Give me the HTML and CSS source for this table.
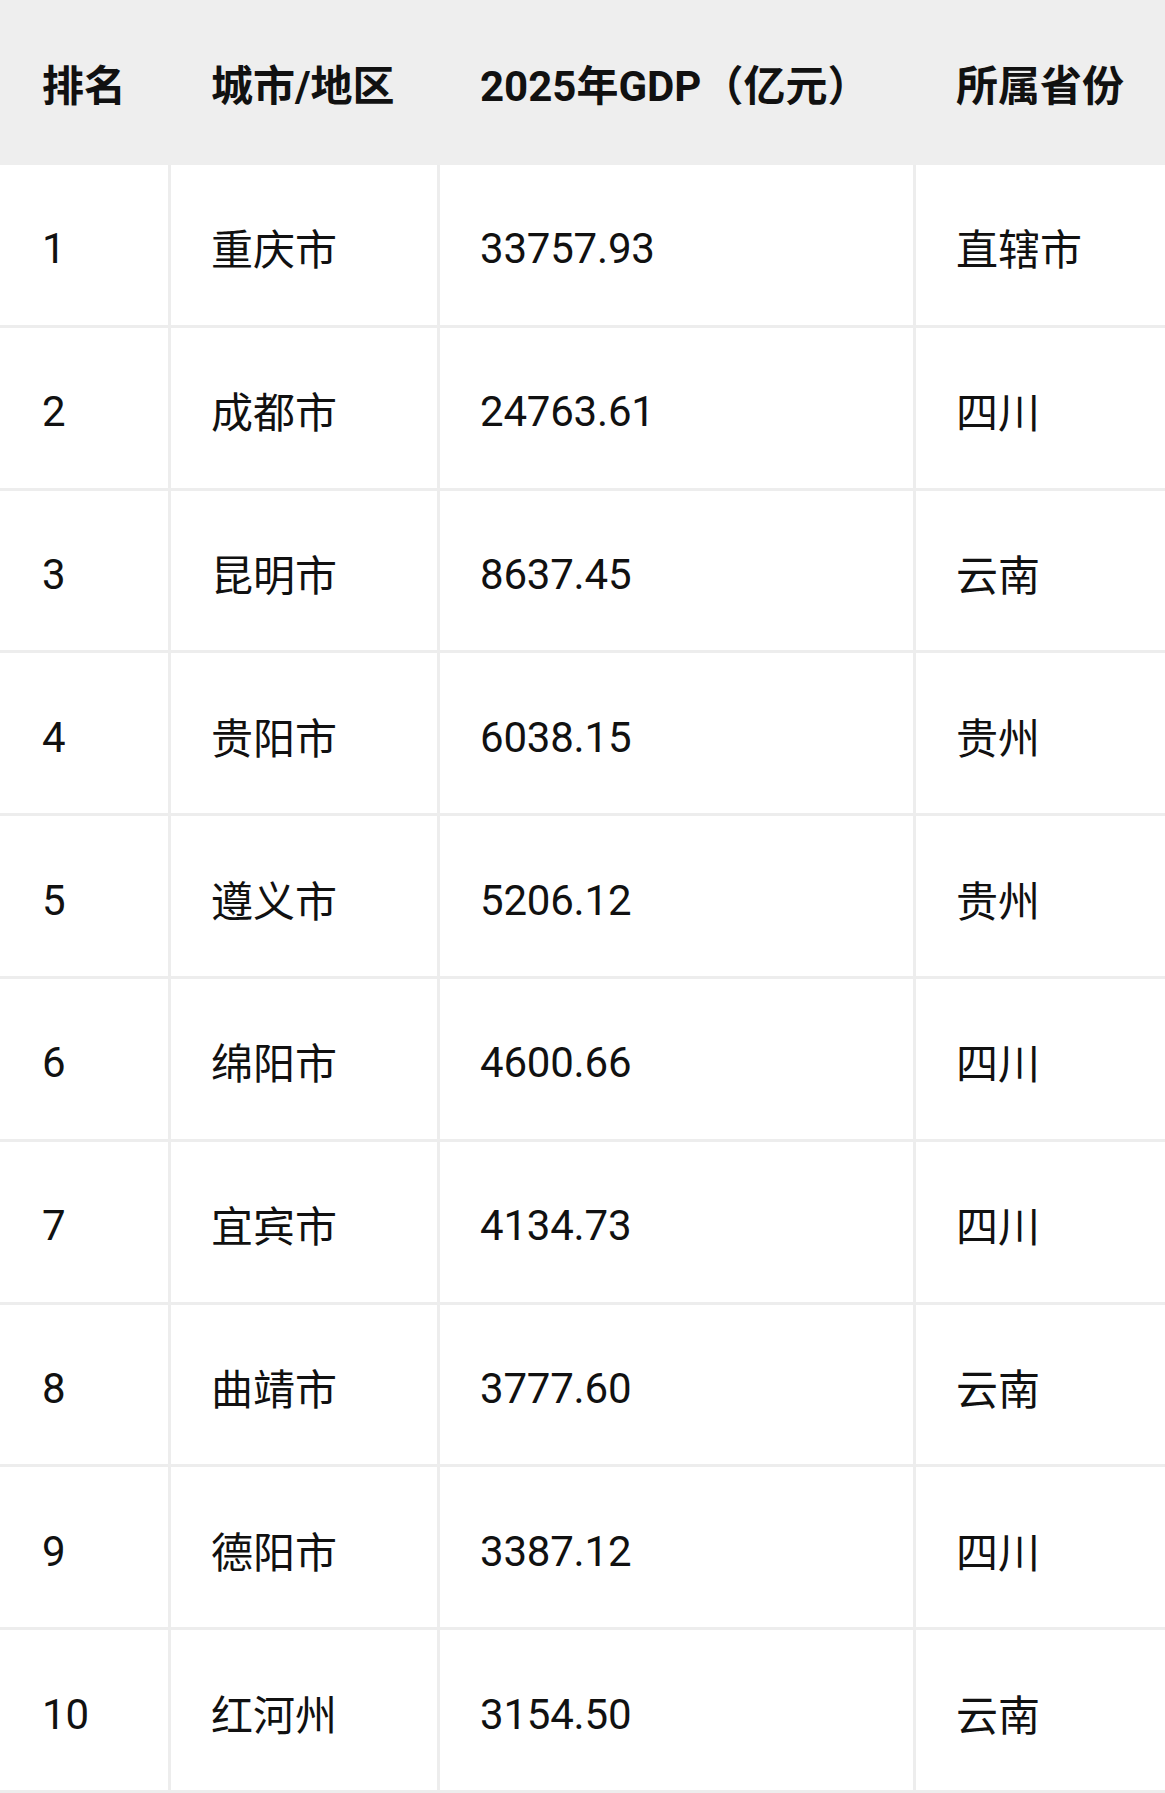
FILE: index.html
```html
<!DOCTYPE html>
<html lang="zh-CN">
<head>
<meta charset="utf-8">
<title>2025年GDP排名</title>
<link rel="stylesheet" href="styles.css">
</head>
<body>
<div class="table">
  <div class="row head">
    <div class="cell">排名</div>
    <div class="cell">城市/地区</div>
    <div class="cell">2025年GDP（亿元）</div>
    <div class="cell">所属省份</div>
  </div>
  <div class="row"><div class="cell"><span class="num">1</span></div><div class="cell">重庆市</div><div class="cell"><span class="num">33757.93</span></div><div class="cell">直辖市</div></div>
  <div class="row"><div class="cell"><span class="num">2</span></div><div class="cell">成都市</div><div class="cell"><span class="num">24763.61</span></div><div class="cell">四川</div></div>
  <div class="row"><div class="cell"><span class="num">3</span></div><div class="cell">昆明市</div><div class="cell"><span class="num">8637.45</span></div><div class="cell">云南</div></div>
  <div class="row"><div class="cell"><span class="num">4</span></div><div class="cell">贵阳市</div><div class="cell"><span class="num">6038.15</span></div><div class="cell">贵州</div></div>
  <div class="row"><div class="cell"><span class="num">5</span></div><div class="cell">遵义市</div><div class="cell"><span class="num">5206.12</span></div><div class="cell">贵州</div></div>
  <div class="row"><div class="cell"><span class="num">6</span></div><div class="cell">绵阳市</div><div class="cell"><span class="num">4600.66</span></div><div class="cell">四川</div></div>
  <div class="row"><div class="cell"><span class="num">7</span></div><div class="cell">宜宾市</div><div class="cell"><span class="num">4134.73</span></div><div class="cell">四川</div></div>
  <div class="row"><div class="cell"><span class="num">8</span></div><div class="cell">曲靖市</div><div class="cell"><span class="num">3777.60</span></div><div class="cell">云南</div></div>
  <div class="row"><div class="cell"><span class="num">9</span></div><div class="cell">德阳市</div><div class="cell"><span class="num">3387.12</span></div><div class="cell">四川</div></div>
  <div class="row"><div class="cell"><span class="num">10</span></div><div class="cell">红河州</div><div class="cell"><span class="num">3154.50</span></div><div class="cell">云南</div></div>
</div>
</body>
</html>
```

FILE: styles.css
```css
html, body {
  margin: 0;
  padding: 0;
  background: #ffffff;
}
body {
  font-family: Roboto, "Noto Sans CJK SC", sans-serif;
  font-size: 42px;
  color: #111111;
  overflow: hidden;
}
.table {
  width: 1165px;
}
.row {
  display: grid;
  grid-template-columns: 168px 269px 476px 1fr;
  height: 162.8px;
  box-sizing: border-box;
  border-bottom: 3px solid #ededed;
}
.cell {
  display: flex;
  align-items: center;
  box-sizing: border-box;
  padding-left: 40px;
  padding-top: 4px;
  border-left: 3px solid #ededed;
  white-space: nowrap;
}
.cell:first-child {
  border-left: none;
  padding-left: 42px;
}
.num {
  font-size: 42px;
  font-weight: 400;
  letter-spacing: -0.2px;
  padding-top: 4px;
}
.head {
  height: 165px;
  background: #eeeeee;
  border-bottom: none;
  font-weight: 700;
}
.head .cell {
  border-left-color: #eeeeee;
  padding-top: 0;
}
```
